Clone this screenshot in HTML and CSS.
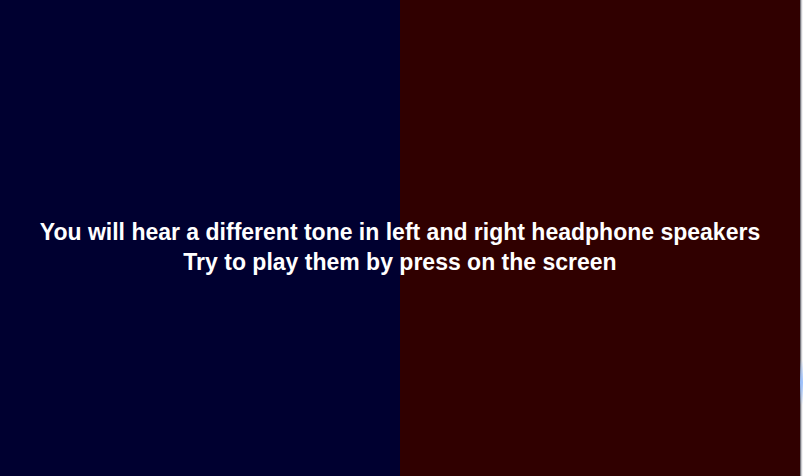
FILE: index.html
```html
<!DOCTYPE html>
<html>
<head>
<meta charset="utf-8">
<link rel="stylesheet" href="styles.css">
</head>
<body>
<div class="screen">
  <div class="panel left"></div>
  <div class="panel right"></div>
  <div class="edge"><div class="glow"></div></div>
  <div class="message">
    <p>You will hear a different tone in left and right headphone speakers</p>
    <p>Try to play them by press on the screen</p>
  </div>
</div>
</body>
</html>
```
FILE: styles.css
```css
html, body {
  margin: 0;
  padding: 0;
  width: 803px;
  height: 476px;
  overflow: hidden;
  background: #000;
}
.screen {
  position: relative;
  display: flex;
  width: 803px;
  height: 476px;
}
.panel {
  width: 400px;
  height: 100%;
}
.left { background: #000030; }
.right { background: #300000; }
.edge {
  position: relative;
  width: 3px;
  height: 100%;
  background: linear-gradient(to right, #7a7a80 0, #7a7a80 1px, #c8c8cc 1px, #c8c8cc 2px, #f2f2f4 2px);
}
.glow {
  position: absolute;
  left: 0;
  top: 360px;
  width: 3px;
  height: 45px;
  background: linear-gradient(to bottom, rgba(150,190,255,0), rgba(150,190,255,0.9), rgba(150,190,255,0));
}
.message {
  position: absolute;
  left: 0;
  top: 217px;
  width: 800px;
  text-align: center;
  font-family: "Liberation Sans", Arial, sans-serif;
  font-weight: bold;
  font-size: 23px;
  line-height: 30px;
  color: #fff;
}
.message p {
  margin: 0;
}
```
